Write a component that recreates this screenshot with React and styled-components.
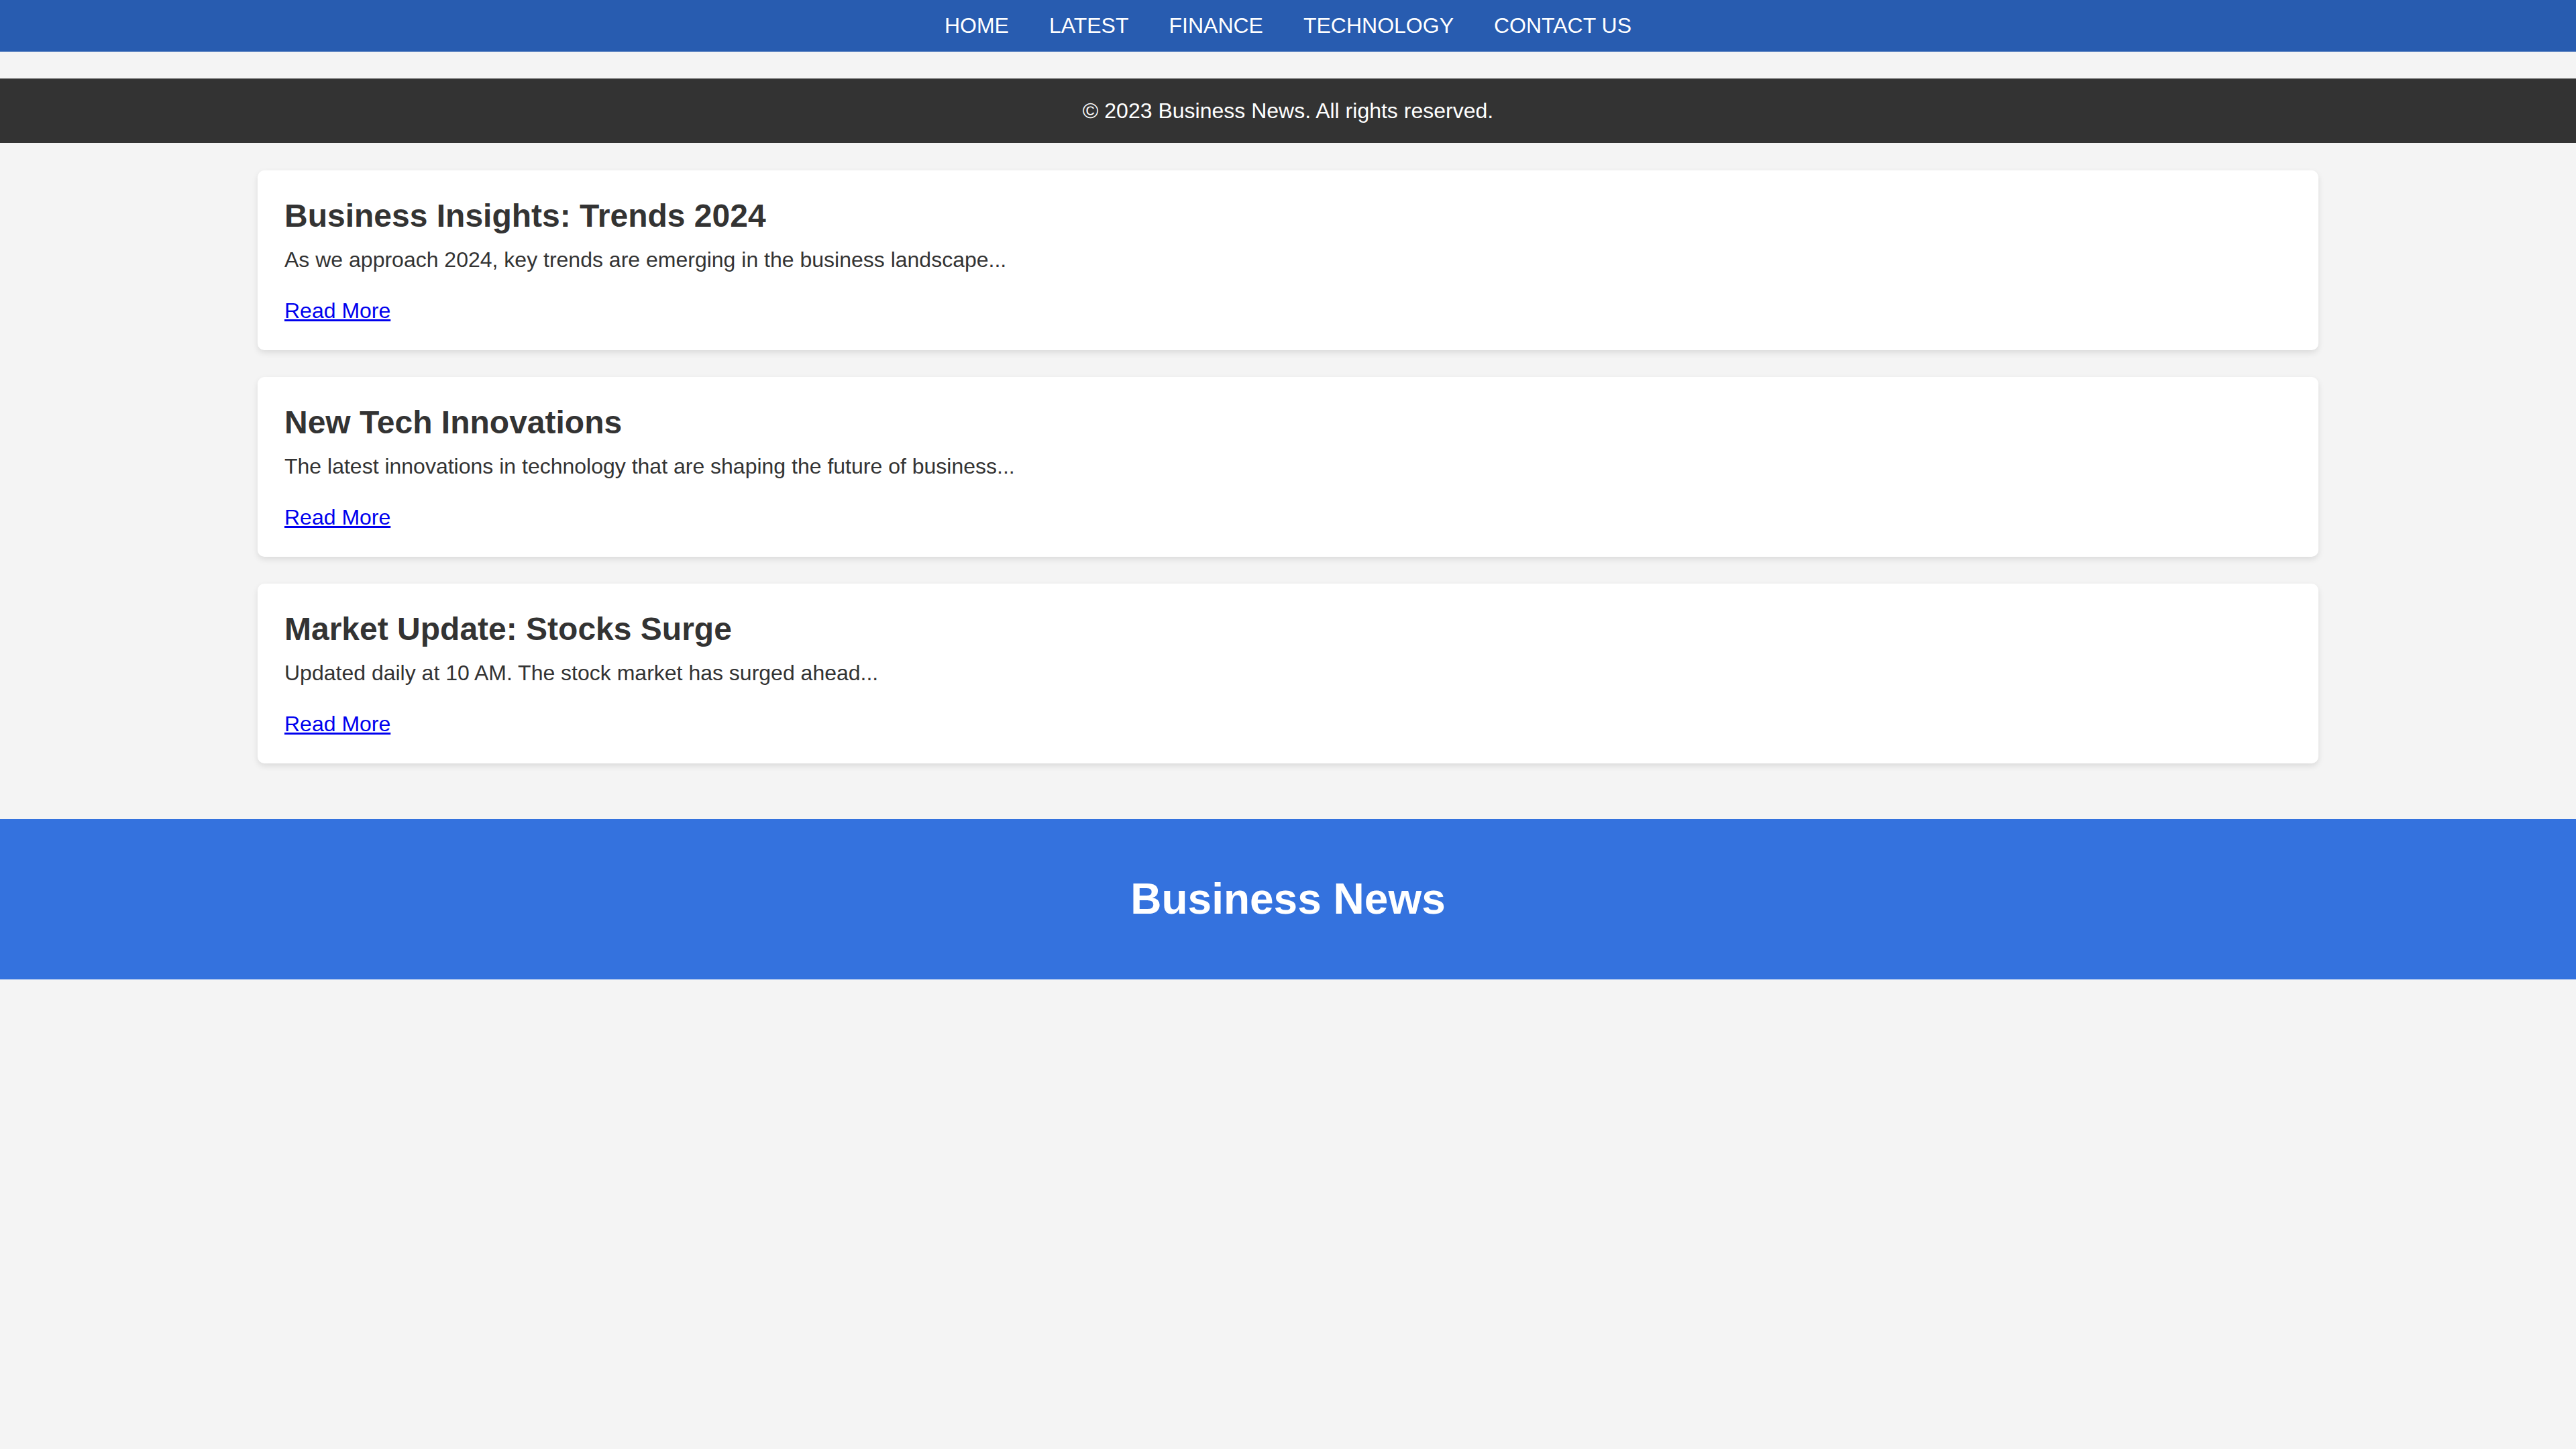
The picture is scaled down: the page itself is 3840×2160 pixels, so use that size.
import React from 'react';
import styled, { createGlobalStyle } from 'styled-components';

const GlobalStyle = createGlobalStyle`
  html, body {
    margin: 0;
    padding: 0;
    background: #f4f4f4;
    font-family: "Liberation Sans", Arial, sans-serif;
  }
`;

const NavBar = styled.nav`
  background: #285cb0;
  padding: 20px 0;
`;

const NavList = styled.ul`
  display: flex;
  justify-content: center;
  gap: 60px;
  list-style: none;
  margin: 0;
  padding: 0;
`;

const NavLink = styled.a`
  color: #fff;
  font-size: 32px;
  line-height: 37px;
  text-decoration: none;
`;

const CopyrightBar = styled.div`
  margin-top: 40px;
  background: #333333;
  color: #fff;
  text-align: center;
  font-size: 32px;
  line-height: 37px;
  padding: 30px 0 29px;
`;

const Main = styled.main`
  width: 80%;
  margin: 0 auto;
  padding: 41px 0 83px;
  display: flex;
  flex-direction: column;
  gap: 40px;
`;

const Card = styled.article`
  background: #fff;
  border-radius: 10px;
  box-shadow: 0 4px 10px rgba(0, 0, 0, 0.1);
  padding: 40px;
`;

const CardTitle = styled.h2`
  margin: 0 0 20px;
  font-size: 48px;
  line-height: 55px;
  font-weight: bold;
  color: #333;
`;

const CardText = styled.p`
  margin: 0 0 39px;
  font-size: 32px;
  line-height: 37px;
  color: #333;
`;

const LinkRow = styled.div`
  font-size: 32px;
  line-height: 37px;
`;

const ReadMore = styled.a`
  color: #0000ee;
  text-decoration: underline;
`;

const Masthead = styled.header`
  background: #3472de;
  padding: 40px 0;
  text-align: center;
`;

const MastTitle = styled.h1`
  margin: 43px 0;
  color: #fff;
  font-size: 64px;
  line-height: 73px;
  font-weight: bold;
`;

const navItems = ['HOME', 'LATEST', 'FINANCE', 'TECHNOLOGY', 'CONTACT US'];

const articles = [
  {
    title: 'Business Insights: Trends 2024',
    text: 'As we approach 2024, key trends are emerging in the business landscape...',
  },
  {
    title: 'New Tech Innovations',
    text: 'The latest innovations in technology that are shaping the future of business...',
  },
  {
    title: 'Market Update: Stocks Surge',
    text: 'Updated daily at 10 AM. The stock market has surged ahead...',
  },
];

export default function App() {
  return (
    <>
      <GlobalStyle />
      <NavBar>
        <NavList>
          {navItems.map((item) => (
            <li key={item}>
              <NavLink href="#">{item}</NavLink>
            </li>
          ))}
        </NavList>
      </NavBar>
      <CopyrightBar>&copy; 2023 Business News. All rights reserved.</CopyrightBar>
      <Main>
        {articles.map((a) => (
          <Card key={a.title}>
            <CardTitle>{a.title}</CardTitle>
            <CardText>{a.text}</CardText>
            <LinkRow>
              <ReadMore href="#">Read More</ReadMore>
            </LinkRow>
          </Card>
        ))}
      </Main>
      <Masthead>
        <MastTitle>Business News</MastTitle>
      </Masthead>
    </>
  );
}
